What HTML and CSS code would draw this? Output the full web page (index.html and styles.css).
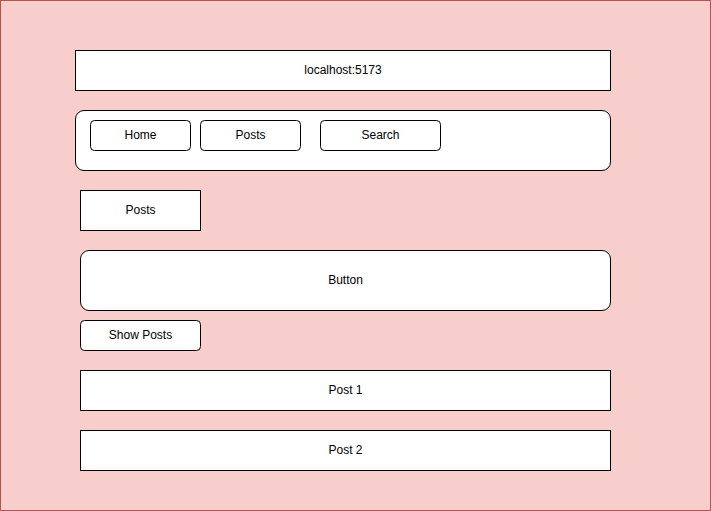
FILE: index.html
```html
<!DOCTYPE html>
<html>
<head>
<meta charset="utf-8">
<link rel="stylesheet" href="styles.css">
</head>
<body>
<div class="canvas">
  <div class="box url">localhost:5173</div>
  <div class="nav">
    <div class="box btn w101">Home</div>
    <div class="box btn w101 gap9">Posts</div>
    <div class="box btn w121 gap19">Search</div>
  </div>
  <div class="box heading">Posts</div>
  <div class="box big">Button</div>
  <div class="box btn w121 show">Show Posts</div>
  <div class="box post">Post 1</div>
  <div class="box post">Post 2</div>
</div>
</body>
</html>
```

FILE: styles.css
```css
html, body {
  margin: 0;
  padding: 0;
}
body {
  width: 711px;
  height: 511px;
  overflow: hidden;
  font-family: "Liberation Sans", Arial, Helvetica, sans-serif;
  font-size: 12px;
  color: #000;
}
.canvas {
  box-sizing: border-box;
  width: 711px;
  height: 511px;
  border: 1px solid #b85450;
  background: #f8cecc;
  padding: 49px 0 0 74px;
  display: flex;
  flex-direction: column;
  align-items: flex-start;
}
.box {
  box-sizing: border-box;
  border: 1px solid #000;
  background: #fff;
  display: flex;
  align-items: center;
  justify-content: center;
  flex-shrink: 0;
  padding-bottom: 2px;
}
.url {
  width: 536px;
  height: 41px;
}
.nav {
  box-sizing: border-box;
  margin-top: 19px;
  width: 536px;
  height: 61px;
  border: 1px solid #000;
  border-radius: 9px;
  background: #fff;
  display: flex;
  align-items: flex-start;
  padding: 9px 0 0 14px;
}
.btn {
  height: 31px;
  border-radius: 4.5px;
}
.w101 { width: 101px; }
.w121 { width: 121px; }
.gap9 { margin-left: 9px; }
.gap19 { margin-left: 19px; }
.heading {
  margin: 19px 0 0 5px;
  width: 121px;
  height: 41px;
}
.big {
  margin: 19px 0 0 5px;
  width: 531px;
  height: 61px;
  border-radius: 9px;
}
.show {
  margin: 9px 0 0 5px;
}
.post {
  margin: 19px 0 0 5px;
  width: 531px;
  height: 41px;
}
```
